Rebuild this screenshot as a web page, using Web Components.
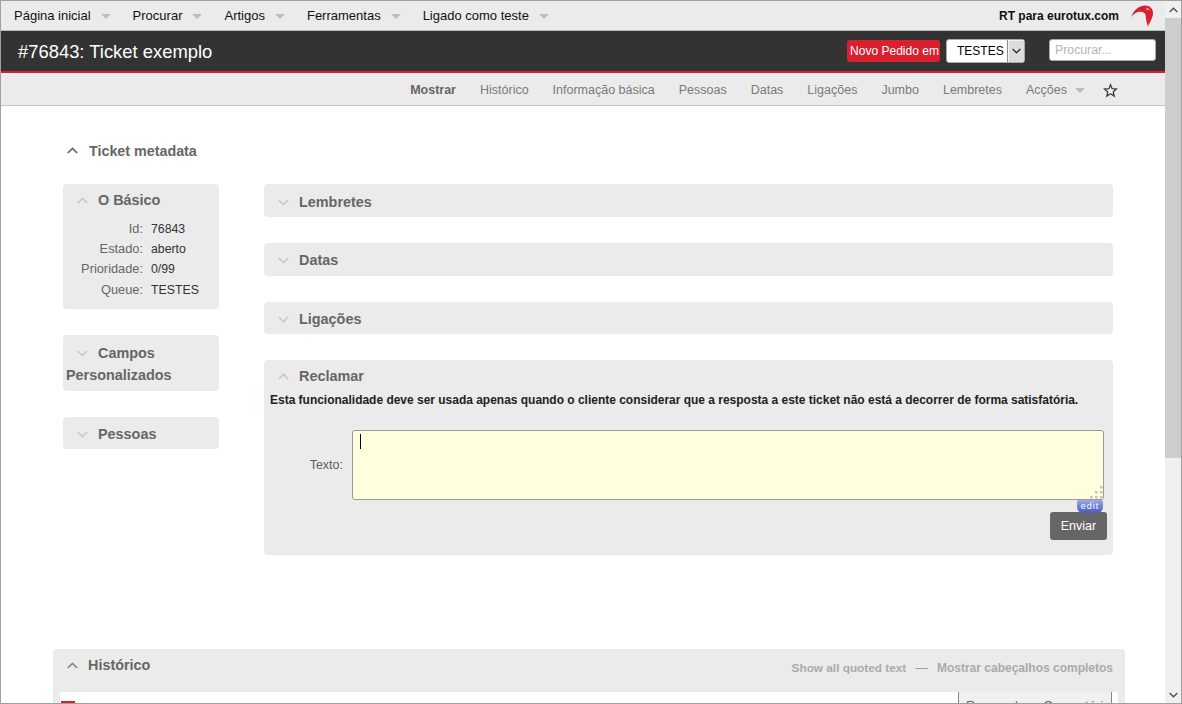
<!DOCTYPE html>
<html lang="pt">
<head>
<meta charset="utf-8">
<title>#76843: Ticket exemplo</title>
<style>
  html, body { margin: 0; height: 100%; overflow: hidden; background: #fff; }
  body { font: 13px "Liberation Sans", Arial, sans-serif; color: #333; }
</style>
</head>
<body>
<rt-app>
  <rt-topnav>
    <rt-menu-item>Página inicial</rt-menu-item>
    <rt-menu-item>Procurar</rt-menu-item>
    <rt-menu-item>Artigos</rt-menu-item>
    <rt-menu-item>Ferramentas</rt-menu-item>
    <rt-menu-item>Ligado como teste</rt-menu-item>
  </rt-topnav>
  <rt-header heading="#76843: Ticket exemplo"></rt-header>
  <rt-pagemenu></rt-pagemenu>
  <rt-metadata>
    <rt-box slot="side" heading="O Básico" open style="--box-h:125px;--title-top:5px">
      <rt-basics></rt-basics>
    </rt-box>
    <rt-box slot="side" heading="Campos Personalizados" style="--box-h:56px;--title-top:7px"></rt-box>
    <rt-box slot="side" heading="Pessoas"></rt-box>
    <rt-box heading="Lembretes" style="--box-h:33px;--title-top:7px"></rt-box>
    <rt-box heading="Datas" style="--box-h:33px"></rt-box>
    <rt-box heading="Ligações"></rt-box>
    <rt-box heading="Reclamar" open style="--box-h:195px;--title-top:5px">
      <rt-complaint></rt-complaint>
    </rt-box>
  </rt-metadata>
  <rt-history></rt-history>
</rt-app>

<script>
const CHEVRON_UP = '<svg width="11" height="7" viewBox="0 0 11 7"><polyline points="0.8,6 5.5,1.4 10.2,6" fill="none" stroke="currentColor" stroke-width="1.7"/></svg>';
const CHEVRON_DOWN = '<svg width="11" height="7" viewBox="0 0 11 7"><polyline points="0.8,1 5.5,5.6 10.2,1" fill="none" stroke="currentColor" stroke-width="1.7"/></svg>';
const TRIANGLE = '<svg width="10" height="5" viewBox="0 0 10 5"><polygon points="0,0 10,0 5,5" fill="#bdbdbd"/></svg>';

class RtElement extends HTMLElement {
  constructor() {
    super();
    this.attachShadow({mode: 'open'});
  }
  connectedCallback() {
    this.shadowRoot.innerHTML = this.render();
  }
}

class RtApp extends RtElement {
  render() {
    return `
    <style>
      :host { display: flex; box-sizing: border-box; height: 704px; border: 1px solid #a0a0a0; overflow: hidden; }
      .page { flex: 1; min-width: 0; overflow: hidden; display: flex; flex-direction: column; }
      .bar { flex: none; width: 16px; background: #f0f0f0; display: flex; flex-direction: column; color: #505050; }
      .arrow { height: 17px; flex: none; display: flex; align-items: center; justify-content: center; }
      .thumb { height: 440px; flex: none; background: #cdcdcd; }
      .rest { flex: 1; }
      svg { width: 9px; height: 6px; }
    </style>
    <div class="page"><slot></slot></div>
    <div class="bar">
      <div class="arrow">${CHEVRON_UP}</div>
      <div class="thumb"></div>
      <div class="rest"></div>
      <div class="arrow">${CHEVRON_DOWN}</div>
    </div>`;
  }
}

class RtTopnav extends RtElement {
  render() {
    return `
    <style>
      :host { display: flex; flex: none; align-items: center; box-sizing: border-box; height: 30px; padding: 0 12px 0 13px; background: #ebebeb; border-bottom: 1px solid #b9b9b9; color: #111; }
      .menu { display: flex; gap: 22px; flex: 1; }
      .brand { font-size: 12px; font-weight: bold; color: #111; margin-right: 12px; }
      svg { display: block; }
    </style>
    <div class="menu"><slot></slot></div>
    <span class="brand">RT para eurotux.com</span>
    <svg width="22" height="22" viewBox="0 0 22 22">
      <path d="M0 12 C3 5 8 0.8 14 0.6 C19 0.6 22 4 22 8 C22 12 20 15 17 21.5 C16 18 14.7 15 14.7 11 C14.7 8 12 6.7 9 6.7 C6 6.7 3 8.5 0 12Z" fill="#d9202f"/>
      <path d="M15 2.5 L19 4.5 L16 5Z" fill="#f6b9bd"/>
    </svg>`;
  }
}

class RtMenuItem extends RtElement {
  render() {
    return `
    <style>
      :host { display: inline-flex; align-items: center; gap: 10px; font-size: 13px; color: #111; white-space: nowrap; }
      svg { display: block; margin-top: 2px; }
    </style>
    <slot></slot>${TRIANGLE}`;
  }
}

class RtHeader extends RtElement {
  render() {
    return `
    <style>
      :host { display: flex; flex: none; align-items: center; box-sizing: border-box; height: 42px; padding: 0 9px 0 17px; background: #333; border-bottom: 2px solid #d9202f; }
      h1 { flex: 1; margin: 2px 0 0; font-size: 18.4px; font-weight: normal; color: #fff; }
      .new { box-sizing: border-box; width: 93px; height: 22px; line-height: 22px; padding-left: 3px; border-radius: 3px; background: #d9202f; color: #fff; font-size: 12px; letter-spacing: 0.02px; white-space: nowrap; overflow: hidden; margin-right: 6px; }
      .queue { display: flex; box-sizing: border-box; width: 79px; height: 24px; margin-right: 24px; border: 1px solid #a8a8a8; border-radius: 3px; background: #fff; color: #000; font-size: 12px; align-items: stretch; }
      .queue span { flex: 1; padding-left: 10px; line-height: 22px; }
      .queue b { box-sizing: border-box; width: 17px; display: flex; align-items: center; justify-content: center; background: #dcdcdc; border: 1px solid #8e8e8e; border-width: 0 0 0 1px; box-shadow: inset 1px 1px 0 #f4f4f4; border-radius: 0 2px 2px 0; color: #333; }
      input { box-sizing: border-box; width: 107px; height: 22px; margin-bottom: 2px; padding: 0 5px; border: 1px solid #aaa; border-radius: 3px; background: #fff; font: 12.3px "Liberation Sans", Arial, sans-serif; outline: none; }
      input::placeholder { color: #b5b5b5; opacity: 1; }
    </style>
    <h1>${this.getAttribute('heading')}</h1>
    <div class="new">Novo Pedido em</div>
    <div class="queue"><span>TESTES</span><b>${CHEVRON_DOWN.replace('width="11" height="7"', 'width="9" height="6"')}</b></div>
    <input placeholder="Procurar...">`;
  }
}

class RtPagemenu extends RtElement {
  render() {
    const items = ['Histórico', 'Informação básica', 'Pessoas', 'Datas', 'Ligações', 'Jumbo', 'Lembretes'];
    return `
    <style>
      :host { display: flex; flex: none; align-items: center; justify-content: flex-end; box-sizing: border-box; height: 33px; padding: 2px 47px 0 0; background: #ebebeb; border-bottom: 1px solid #c4c4c4; font-size: 12.5px; color: #7a7a7a; white-space: nowrap; gap: 24px; }
      b { color: #666; }
      .more { display: inline-flex; align-items: center; gap: 8px; }
      .more svg { margin-top: 1px; }
      .star { display: block; margin-left: -6px; }
    </style>
    <b>Mostrar</b>
    ${items.map(i => `<span>${i}</span>`).join('')}
    <span class="more">Acções ${TRIANGLE}</span>
    <svg class="star" width="15" height="15" viewBox="0 0 15 15"><polygon points="7.5,1.8 9.1,5.7 13.4,6.1 10.2,8.9 11.2,13.1 7.5,10.8 3.8,13.1 4.8,8.9 1.6,6.1 5.9,5.7" fill="#f4f4f4" stroke="#3c3c3c" stroke-width="1.3"/></svg>`;
  }
}

class RtMetadata extends RtElement {
  render() {
    return `
    <style>
      :host { display: block; flex: none; padding: 33px 52px 0 62px; }
      h2 { display: flex; align-items: center; gap: 11px; height: 23px; margin: 0 0 22px 4px; font-size: 14.3px; color: #666; }
      h2 svg { color: #666; }
      .cols { display: grid; grid-template-columns: 156px 849px; column-gap: 45px; align-items: start; }
      .col { display: flex; flex-direction: column; gap: 26px; }
    </style>
    <h2>${CHEVRON_UP}Ticket metadata</h2>
    <div class="cols">
      <div class="col"><slot name="side"></slot></div>
      <div class="col"><slot></slot></div>
    </div>`;
  }
}

class RtBox extends RtElement {
  render() {
    const open = this.hasAttribute('open');
    return `
    <style>
      :host { display: block; box-sizing: border-box; height: var(--box-h, 32px); background: #ebebeb; border-radius: 4px; }
      h3 { margin: 0; padding: var(--title-top, 6px) 3px 0; font-size: 14.4px; line-height: 22px; font-weight: bold; color: #666; }
      h3 svg { color: #c8c8c8; margin: 0 10px 1px 11px; vertical-align: middle; }
    </style>
    <h3>${open ? CHEVRON_UP : CHEVRON_DOWN}${this.getAttribute('heading')}</h3>
    <slot></slot>`;
  }
}

class RtBasics extends RtElement {
  render() {
    const rows = [['Id:', '76843'], ['Estado:', 'aberto'], ['Prioridade:', '0/99'], ['Queue:', 'TESTES']];
    return `
    <style>
      :host { display: grid; grid-template-columns: 80px auto; column-gap: 8px; grid-auto-rows: 20.2px; line-height: 20px; align-items: baseline; padding-top: 8px; font-size: 12.3px; }
      .k { text-align: right; color: #666; font-size: 12.8px; }
      .v { color: #333; }
    </style>
    ${rows.map(r => `<span class="k">${r[0]}</span><span class="v">${r[1]}</span>`).join('')}`;
  }
}

class RtComplaint extends RtElement {
  render() {
    return `
    <style>
      :host { display: block; padding: 3px 6px 0; }
      p { margin: 0; font-size: 11.97px; line-height: 20px; font-weight: bold; color: #222; white-space: nowrap; }
      .row { display: grid; grid-template-columns: 73px 752px; column-gap: 9px; align-items: center; margin-top: 20px; }
      label { text-align: right; font-size: 12.5px; color: #5e5e5e; }
      .field { position: relative; height: 70px; }
      textarea { display: block; box-sizing: border-box; width: 100%; height: 100%; margin: 0; border: 1px solid #999; border-radius: 3px; background: #ffffdd; resize: none; outline: none; }
      .caret { position: absolute; left: 8px; top: 4px; width: 1px; height: 15px; background: #000; }
      .grip { position: absolute; right: 1px; bottom: 1px; display: block; }
      .edit { position: absolute; right: 1px; top: 70px; width: 26px; height: 13px; box-sizing: border-box; border-radius: 2px 2px 6px 6px; background: linear-gradient(#9aa8ea, #4a58bc); color: #fff; font: 9px/13px "Liberation Sans", Arial, sans-serif; letter-spacing: 1px; text-align: center; z-index: 1; }
      .actions { display: flex; justify-content: flex-end; padding-top: 12px; }
      button { width: 57px; height: 28px; padding: 0; border: 0; border-radius: 3px; background: #666; color: #fff; font: 12.5px "Liberation Sans", Arial, sans-serif; }
    </style>
    <p>Esta funcionalidade deve ser usada apenas quando o cliente considerar que a resposta a este ticket não está a decorrer de forma satisfatória.</p>
    <div class="row">
      <label>Texto:</label>
      <div class="field">
        <textarea></textarea>
        <span class="caret"></span>
        <svg class="grip" width="13" height="13" viewBox="0 0 13 13" fill="#c4c4b0"><rect x="10" y="0" width="2.5" height="2.5"/><rect x="5" y="5" width="2.5" height="2.5"/><rect x="10" y="5" width="2.5" height="2.5"/><rect x="0" y="10" width="2.5" height="2.5"/><rect x="5" y="10" width="2.5" height="2.5"/><rect x="10" y="10" width="2.5" height="2.5"/></svg>
        <span class="edit">edit</span>
      </div>
    </div>
    <div class="actions"><button>Enviar</button></div>`;
  }
}

class RtHistory extends RtElement {
  render() {
    return `
    <style>
      :host { display: block; flex: none; box-sizing: border-box; width: 1072px; margin: 94px 0 0 52px; padding: 0 7px; height: 120px; background: #ebebeb; border-radius: 4px 4px 0 0; }
      .head { display: flex; align-items: center; height: 43px; }
      h2 { display: flex; align-items: center; gap: 10px; flex: 1; margin: -11px 0 0 7px; font-size: 14.4px; color: #666; }
      h2 svg { color: #888; }
      .links { margin: -6px 5px 0 0; font-size: 12px; font-weight: bold; color: #aaa; }
      .links span { font-size: 11.8px; margin-left: 1px; }
      .links i { font-style: normal; font-weight: normal; margin: 0 6px; color: #999; }
      .panel { display: flex; justify-content: flex-end; height: 60px; background: #fff; border-radius: 3px 3px 0 0; position: relative; }
      .flag { position: absolute; left: 1px; top: 9px; width: 14px; height: 3px; background: #d9202f; }
      .act { box-sizing: border-box; width: 154px; margin-right: 6px; padding: 6px 0 0 7px; background: #f0f0f0; border: 1px solid #888; border-width: 0 1px; font-size: 13px; word-spacing: 10px; color: #666; white-space: nowrap; }
    </style>
    <div class="head">
      <h2>${CHEVRON_UP}Histórico</h2>
      <div class="links"><span>Show all quoted text</span> <i>—</i> Mostrar cabeçalhos completos</div>
    </div>
    <div class="panel"><span class="flag"></span><div class="act">Responder Comentário</div></div>`;
  }
}

customElements.define('rt-app', RtApp);
customElements.define('rt-topnav', RtTopnav);
customElements.define('rt-menu-item', RtMenuItem);
customElements.define('rt-header', RtHeader);
customElements.define('rt-pagemenu', RtPagemenu);
customElements.define('rt-metadata', RtMetadata);
customElements.define('rt-box', RtBox);
customElements.define('rt-basics', RtBasics);
customElements.define('rt-complaint', RtComplaint);
customElements.define('rt-history', RtHistory);
</script>
</body>
</html>
